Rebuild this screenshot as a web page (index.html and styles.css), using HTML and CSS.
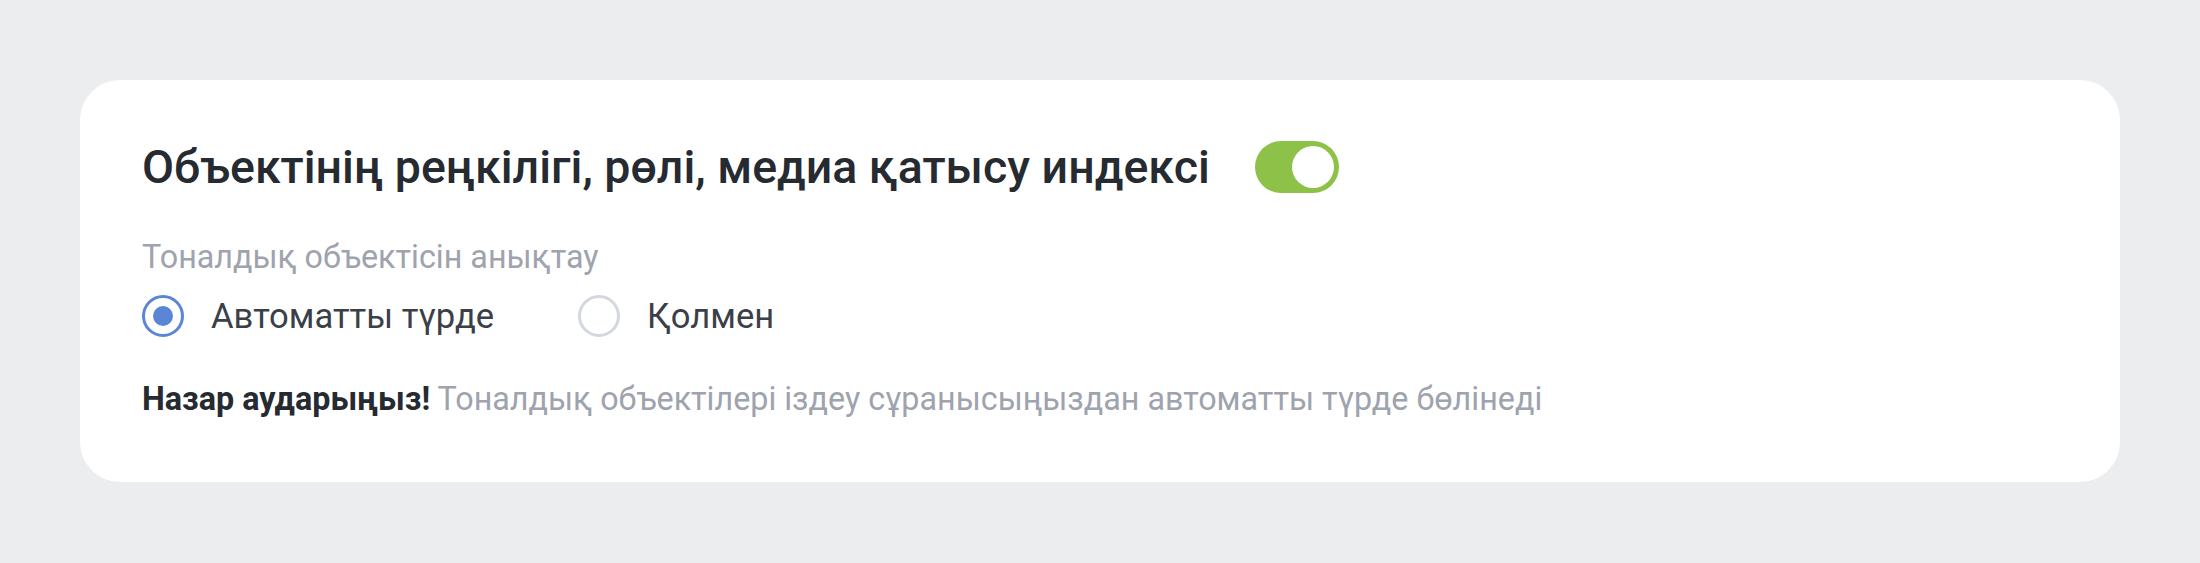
FILE: index.html
```html
<!DOCTYPE html>
<html lang="kk">
<head>
<meta charset="utf-8">
<title>Тоналдық</title>
<link rel="stylesheet" href="styles.css">
</head>
<body>
<div class="card">
  <div class="head">
    <h2 class="title">Объектінің реңкілігі, рөлі, медиа қатысу индексі</h2>
    <span class="toggle"><span class="knob"></span></span>
  </div>
  <div class="sub">Тоналдық объектісін анықтау</div>
  <div class="radios">
    <label class="opt"><span class="radio checked"></span><span class="lbl">Автоматты түрде</span></label>
    <label class="opt"><span class="radio"></span><span class="lbl">Қолмен</span></label>
  </div>
  <p class="note"><b>Назар аударыңыз!</b> Тоналдық объектілері іздеу сұранысыңыздан автоматты түрде бөлінеді</p>
</div>
</body>
</html>
```
FILE: styles.css
```css
html, body { margin: 0; padding: 0; }
body {
  background: #ecedef;
  padding: 80px;
  font-family: Roboto, "Noto Sans", sans-serif;
}
.card {
  background: #fff;
  border-radius: 40px;
  padding: 61px 62px 0;
  box-sizing: border-box;
  height: 402px;
}
.head {
  display: flex;
  align-items: center;
  gap: 45px;
  height: 52px;
}
.title {
  margin: 0;
  font-size: 46.5px;
  font-weight: 500;
  color: #262a31;
  line-height: 52px;
}
.toggle {
  width: 84px;
  height: 52px;
  border-radius: 26px;
  background: #8dc147;
  box-sizing: border-box;
  padding: 5px;
  display: flex;
  justify-content: flex-end;
}
.knob {
  width: 42px;
  height: 42px;
  border-radius: 50%;
  background: #fff;
}
.sub {
  margin-top: 45px;
  font-size: 32.3px;
  line-height: 38px;
  color: #9ea3ad;
}
.radios {
  margin-top: 19px;
  display: flex;
  align-items: center;
  gap: 84px;
  height: 42px;
}
.opt {
  display: flex;
  align-items: center;
  gap: 27px;
}
.radio {
  width: 42px;
  height: 42px;
  border-radius: 50%;
  border: 3px solid #d3d7de;
  box-sizing: border-box;
  display: flex;
  align-items: center;
  justify-content: center;
}
.radio.checked { border-color: #5a86d5; }
.radio.checked::after {
  content: "";
  width: 20px;
  height: 20px;
  border-radius: 50%;
  background: #5a86d5;
}
.lbl {
  font-size: 34.6px;
  color: #3b3f47;
  line-height: 42px;
}
.note {
  margin: 43px 0 0;
  font-size: 32.3px;
  line-height: 38px;
  color: #9ea3ad;
}
.note b {
  font-weight: 700;
  color: #262a31;
}
```
